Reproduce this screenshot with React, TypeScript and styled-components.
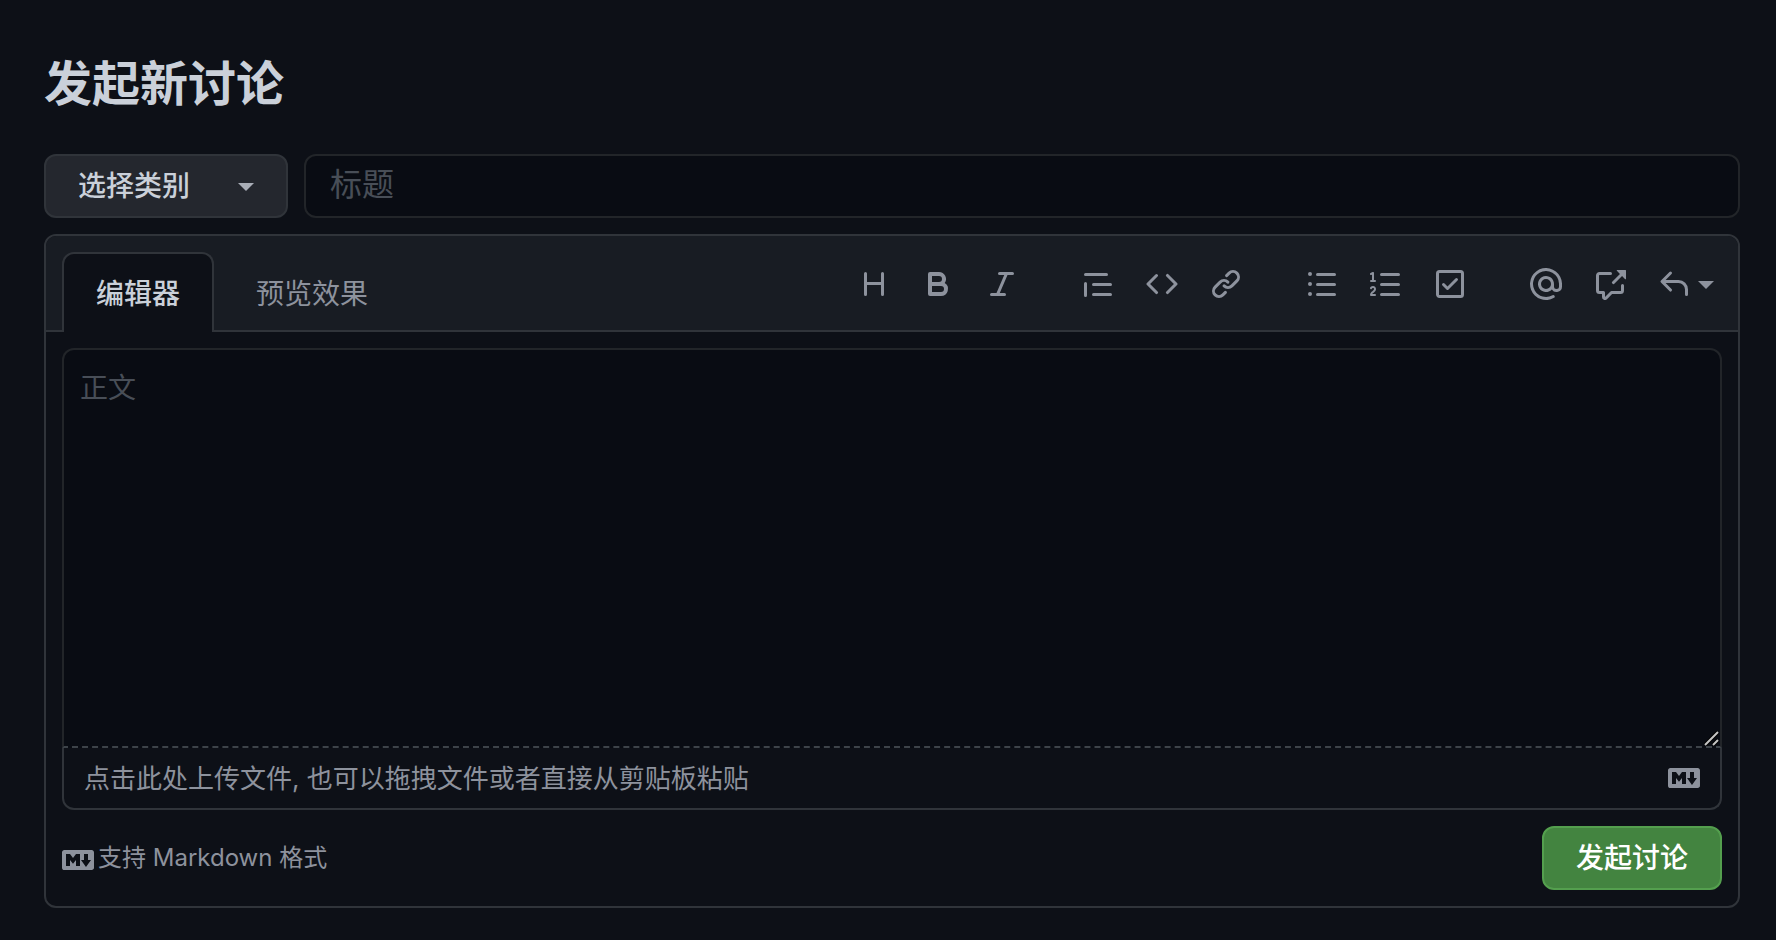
import React from 'react';
import styled, { createGlobalStyle } from 'styled-components';

const c = {
  canvas: '#0d1017',
  header: '#181c23',
  inset: '#090c13',
  border: '#30343a',
  borderSoft: '#222529',
  button: '#24272e',
  text: '#cad0d9',
  muted: '#8d929d',
  placeholder: '#484e57',
  green: '#438440',
  greenBorder: '#549f4e',
};

const GlobalStyle = createGlobalStyle`
  *, *::before, *::after { box-sizing: border-box; }
  html { background: ${c.canvas}; }
  body {
    margin: 0;
    color: ${c.text};
    font-family: Inter, 'Noto Sans CJK SC', sans-serif;
    font-size: 28px;
    line-height: 42px;
  }
  button, input, textarea { font: inherit; color: inherit; margin: 0; }
  button { cursor: pointer; }
`;

const Page = styled.main`
  padding: 48px 36px 32px 44px;
`;

const Title = styled.h1`
  margin: 0 0 34px;
  font-size: 48px;
  line-height: 72px;
  font-weight: 700;
`;

const Form = styled.form`
  display: flex;
  flex-direction: column;
  gap: 16px;
`;

const TitleRow = styled.div`
  display: flex;
  gap: 16px;
`;

const Button = styled.button<{ $primary?: boolean }>`
  display: flex;
  align-items: center;
  height: 64px;
  padding: 0 32px;
  border: 2px solid ${p => (p.$primary ? c.greenBorder : c.border)};
  border-radius: 12px;
  background: ${p => (p.$primary ? c.green : c.button)};
  color: ${p => (p.$primary ? '#fff' : c.text)};
  font-weight: 500;
  white-space: nowrap;
`;

const Caret = styled.span<{ $bright?: boolean }>`
  margin-top: 2px;
  border: 8px solid transparent;
  border-top-color: ${p => (p.$bright ? '#a9aeb7' : c.muted)};
  border-bottom-width: 0;
`;

const CategoryButton = styled(Button)`
  gap: 48px;
`;

const TitleInput = styled.input`
  flex: 1;
  min-width: 0;
  height: 64px;
  padding: 0 24px 4px;
  border: 2px solid ${c.borderSoft};
  border-radius: 12px;
  background: ${c.inset};
  font-size: 32px;
  outline: none;
  &::placeholder { color: ${c.placeholder}; opacity: 1; }
`;

const Panel = styled.section`
  border: 2px solid ${c.border};
  border-radius: 12px;
  overflow: hidden;
`;

const PanelHeader = styled.div`
  display: flex;
  justify-content: space-between;
  padding: 16px 16px 0;
  background: ${c.header};
  box-shadow: inset 0 -2px ${c.border};
`;

const Tabs = styled.div`
  display: flex;
  gap: 8px;
`;

const Tab = styled.button<{ $active?: boolean }>`
  height: 80px;
  padding: 2px 32px 0;
  border: 2px solid ${p => (p.$active ? c.border : 'transparent')};
  border-bottom: 0;
  border-radius: 12px 12px 0 0;
  background: ${p => (p.$active ? c.canvas : 'transparent')};
  color: ${p => (p.$active ? c.text : c.muted)};
  font-weight: ${p => (p.$active ? 500 : 400)};
`;

const Toolbar = styled.div`
  display: flex;
  align-items: flex-start;
  gap: 32px;
`;

const ToolGroup = styled.div`
  display: flex;
`;

const Tool = styled.button`
  display: flex;
  align-items: center;
  gap: 8px;
  height: 64px;
  padding: 0 16px;
  border: 0;
  background: none;
  color: ${c.muted};
`;

const ReplyTool = styled(Tool)`
  padding-right: 8px;
`;

const Icon = styled.svg`
  display: block;
  flex: none;
  width: 32px;
  height: 32px;
  fill: currentColor;
`;

const PanelBody = styled.div`
  display: flex;
  flex-direction: column;
  padding: 16px;
`;

const EditorBox = styled.div`
  position: relative;
  display: flex;
`;

const Editor = styled.textarea`
  flex: 1;
  min-width: 0;
  height: 400px;
  padding: 17px 16px 16px;
  border: 2px solid ${c.borderSoft};
  border-bottom: 2px dashed #3d4349;
  border-radius: 12px 12px 0 0;
  background: ${c.inset};
  resize: vertical;
  outline: none;
  &::placeholder { color: ${c.placeholder}; opacity: 1; }
  &::-webkit-resizer { background: transparent; }
`;

const Grip = styled.svg`
  position: absolute;
  right: 3px;
  bottom: 2px;
  width: 15px;
  height: 15px;
  pointer-events: none;
`;

const DropBar = styled.div`
  display: flex;
  align-items: center;
  justify-content: space-between;
  height: 62px;
  padding: 0 20px;
  border: 2px solid ${c.border};
  border-top: 0;
  border-radius: 0 0 12px 12px;
  color: ${c.muted};
  font-size: 26px;
`;

const UploadLabel = styled.label`
  position: relative;
  padding-top: 2px;
  cursor: pointer;
`;

const FileInput = styled.input`
  position: absolute;
  inset: 0;
  width: 100%;
  opacity: 0;
`;

const Link = styled.a`
  display: flex;
  align-items: center;
  gap: 4px;
  color: ${c.muted};
  font-size: 24px;
  text-decoration: none;
`;

const HelpLink = styled(Link)`
  ${Icon} { margin-top: 4px; }
`;

const Footer = styled.div`
  display: flex;
  align-items: center;
  justify-content: space-between;
  padding-top: 16px;
`;

const icons = {
  heading:
    'M3.75 2a.75.75 0 01.75.75V7h7V2.75a.75.75 0 011.5 0v10.5a.75.75 0 01-1.5 0V8.5h-7v4.75a.75.75 0 01-1.5 0V2.75A.75.75 0 013.75 2z',
  bold:
    'M4 2a1 1 0 00-1 1v10a1 1 0 001 1h5.5a3.5 3.5 0 001.852-6.47A3.5 3.5 0 008.5 2H4zm4.5 5a1.5 1.5 0 100-3H5v3h3.5zM5 9v3h4.5a1.5 1.5 0 000-3H5z',
  italic:
    'M6 2.75A.75.75 0 016.75 2h6.5a.75.75 0 010 1.5h-2.505l-3.858 9H9.25a.75.75 0 010 1.5h-6.5a.75.75 0 010-1.5h2.505l3.858-9H6.75A.75.75 0 016 2.75z',
  quote:
    'M1.75 2.5a.75.75 0 000 1.5h10.5a.75.75 0 000-1.5H1.75zm4 5a.75.75 0 000 1.5h8.5a.75.75 0 000-1.5h-8.5zm0 5a.75.75 0 000 1.5h8.5a.75.75 0 000-1.5h-8.5zM2.5 7.75a.75.75 0 00-1.5 0v6a.75.75 0 001.5 0v-6z',
  code:
    'M4.72 3.22a.75.75 0 011.06 1.06L2.06 8l3.72 3.72a.75.75 0 11-1.06 1.06L.47 8.53a.75.75 0 010-1.06l4.25-4.25zm6.56 0a.75.75 0 10-1.06 1.06L13.94 8l-3.72 3.72a.75.75 0 101.06 1.06l4.25-4.25a.75.75 0 000-1.06l-4.25-4.25z',
  link:
    'M7.775 3.275a.75.75 0 001.06 1.06l1.25-1.25a2 2 0 112.83 2.83l-2.5 2.5a2 2 0 01-2.83 0 .75.75 0 00-1.06 1.06 3.5 3.5 0 004.95 0l2.5-2.5a3.5 3.5 0 00-4.95-4.95l-1.25 1.25zm-4.69 9.64a2 2 0 010-2.83l2.5-2.5a2 2 0 012.83 0 .75.75 0 001.06-1.06 3.5 3.5 0 00-4.95 0l-2.5 2.5a3.5 3.5 0 004.95 4.95l1.25-1.25a.75.75 0 00-1.06-1.06l-1.25 1.25a2 2 0 01-2.83 0z',
  bullets:
    'M2 4a1 1 0 100-2 1 1 0 000 2zm3.75-1.5a.75.75 0 000 1.5h8.5a.75.75 0 000-1.5h-8.5zm0 5a.75.75 0 000 1.5h8.5a.75.75 0 000-1.5h-8.5zm0 5a.75.75 0 000 1.5h8.5a.75.75 0 000-1.5h-8.5zM3 8a1 1 0 11-2 0 1 1 0 012 0zm-1 6a1 1 0 100-2 1 1 0 000 2z',
  numbers:
    'M2.003 2.5a.5.5 0 00-.723-.447l-1.003.5a.5.5 0 00.446.895l.28-.14V6H.5a.5.5 0 000 1h2.006a.5.5 0 100-1h-.503V2.5zM5 3.25a.75.75 0 01.75-.75h8.5a.75.75 0 010 1.5h-8.5A.75.75 0 015 3.25zm0 5a.75.75 0 01.75-.75h8.5a.75.75 0 010 1.5h-8.5A.75.75 0 015 8.25zm0 5a.75.75 0 01.75-.75h8.5a.75.75 0 010 1.5h-8.5a.75.75 0 01-.75-.75zM.924 10.32l.003-.004a.851.851 0 01.144-.153A.66.66 0 011.5 10c.195 0 .306.068.374.146a.57.57 0 01.128.376c0 .453-.269.682-.8 1.078l-.035.025C.692 11.98 0 12.495 0 13.5a.5.5 0 00.5.5h2.003a.5.5 0 000-1H1.146c.132-.197.351-.372.654-.597l.047-.035c.47-.35 1.156-.858 1.156-1.845 0-.365-.118-.744-.377-1.038-.268-.303-.658-.484-1.126-.484-.48 0-.84.202-1.068.392a1.858 1.858 0 00-.348.384l-.007.011-.002.004-.001.002-.001.001a.5.5 0 00.851.525z',
  tasks:
    'M2.5 2.75a.25.25 0 01.25-.25h10.5a.25.25 0 01.25.25v10.5a.25.25 0 01-.25.25H2.75a.25.25 0 01-.25-.25V2.75zM2.75 1A1.75 1.75 0 001 2.75v10.5c0 .966.784 1.75 1.75 1.75h10.5A1.75 1.75 0 0015 13.25V2.75A1.75 1.75 0 0013.25 1H2.75zm9.03 5.28a.75.75 0 00-1.06-1.06L6.75 9.19 5.28 7.72a.75.75 0 00-1.06 1.06l2 2a.75.75 0 001.06 0l4.5-4.5z',
  mention:
    'M4.75 2.37a6.5 6.5 0 006.5 11.26.75.75 0 01.75 1.298 8 8 0 113.994-7.273.754.754 0 01.006.095v1.5a2.75 2.75 0 01-5.072 1.475A4 4 0 1112 8v1.25a1.25 1.25 0 002.5 0V7.867a6.5 6.5 0 00-9.75-5.496V2.37zM10.5 8a2.5 2.5 0 10-5 0 2.5 2.5 0 005 0z',
  reference:
    'M16 1.25v4.146a.25.25 0 01-.427.177L14.03 4.03l-3.75 3.75a.75.75 0 11-1.06-1.06l3.75-3.75-1.543-1.543A.25.25 0 0111.604 1h4.146a.25.25 0 01.25.25zM2.75 3.5a.25.25 0 00-.25.25v7.5c0 .138.112.25.25.25h2a.75.75 0 01.75.75v2.19l2.72-2.72a.75.75 0 01.53-.22h4.5a.25.25 0 00.25-.25v-2.5a.75.75 0 111.5 0v2.5A1.75 1.75 0 0113.25 13H9.06l-2.573 2.573A1.457 1.457 0 014 14.543V13H2.75A1.75 1.75 0 011 11.25v-7.5C1 2.784 1.784 2 2.75 2h5.5a.75.75 0 010 1.5h-5.5z',
  reply:
    'M6.78 1.97a.75.75 0 010 1.06L3.81 6h6.44A4.75 4.75 0 0115 10.75v2.5a.75.75 0 01-1.5 0v-2.5a3.25 3.25 0 00-3.25-3.25H3.81l2.97 2.97a.75.75 0 11-1.06 1.06L1.47 7.28a.75.75 0 010-1.06l4.25-4.25a.75.75 0 011.06 0z',
  markdown:
    'M14.85 3H1.15C.52 3 0 3.52 0 4.15v7.69C0 12.48.52 13 1.15 13h13.69c.64 0 1.15-.52 1.15-1.15v-7.7C16 3.52 15.48 3 14.85 3zM9 11H7V8L5.5 9.92 4 8v3H2V5h2l1.5 2L7 5h2v6zm2.99.5L9.5 8H11V5h2v3h1.5l-2.51 3.5z',
};

type IconName = keyof typeof icons;

const Glyph = ({ name }: { name: IconName }) => (
  <Icon viewBox="0 0 16 16" aria-hidden="true">
    <path fillRule="evenodd" d={icons[name]} />
  </Icon>
);

const toolGroups: IconName[][] = [
  ['heading', 'bold', 'italic'],
  ['quote', 'code', 'link'],
  ['bullets', 'numbers', 'tasks'],
];

export default function App() {
  return (
    <>
      <GlobalStyle />
      <Page>
        <Title>发起新讨论</Title>
        <Form onSubmit={e => e.preventDefault()}>
          <TitleRow>
            <CategoryButton type="button" aria-haspopup="menu">
              选择类别
              <Caret $bright />
            </CategoryButton>
            <TitleInput type="text" placeholder="标题" aria-label="标题" />
          </TitleRow>
          <Panel>
            <PanelHeader>
              <Tabs role="tablist">
                <Tab type="button" role="tab" aria-selected="true" $active>
                  编辑器
                </Tab>
                <Tab type="button" role="tab" aria-selected="false">
                  预览效果
                </Tab>
              </Tabs>
              <Toolbar role="toolbar">
                {toolGroups.map(group => (
                  <ToolGroup key={group[0]}>
                    {group.map(name => (
                      <Tool key={name} type="button" aria-label={name}>
                        <Glyph name={name} />
                      </Tool>
                    ))}
                  </ToolGroup>
                ))}
                <ToolGroup>
                  <Tool type="button" aria-label="mention">
                    <Glyph name="mention" />
                  </Tool>
                  <Tool type="button" aria-label="reference">
                    <Glyph name="reference" />
                  </Tool>
                  <ReplyTool type="button" aria-label="reply" aria-haspopup="menu">
                    <Glyph name="reply" />
                    <Caret />
                  </ReplyTool>
                </ToolGroup>
              </Toolbar>
            </PanelHeader>
            <PanelBody>
              <EditorBox>
                <Editor placeholder="正文" aria-label="正文" />
                <Grip viewBox="0 0 15 15" aria-hidden="true">
                  <path d="M1 14L14 1M9 14l5-5" stroke="#000" strokeWidth="4" />
                  <path d="M1 14L14 1M9 14l5-5" stroke="#c4c4c4" strokeWidth="2" />
                </Grip>
              </EditorBox>
              <DropBar>
                <UploadLabel>
                  <FileInput type="file" multiple />
                  点击此处上传文件, 也可以拖拽文件或者直接从剪贴板粘贴
                </UploadLabel>
                <Link href="#markdown" aria-label="Markdown">
                  <Glyph name="markdown" />
                </Link>
              </DropBar>
              <Footer>
                <HelpLink href="#markdown">
                  <Glyph name="markdown" />
                  支持 Markdown 格式
                </HelpLink>
                <Button type="submit" $primary>
                  发起讨论
                </Button>
              </Footer>
            </PanelBody>
          </Panel>
        </Form>
      </Page>
    </>
  );
}
